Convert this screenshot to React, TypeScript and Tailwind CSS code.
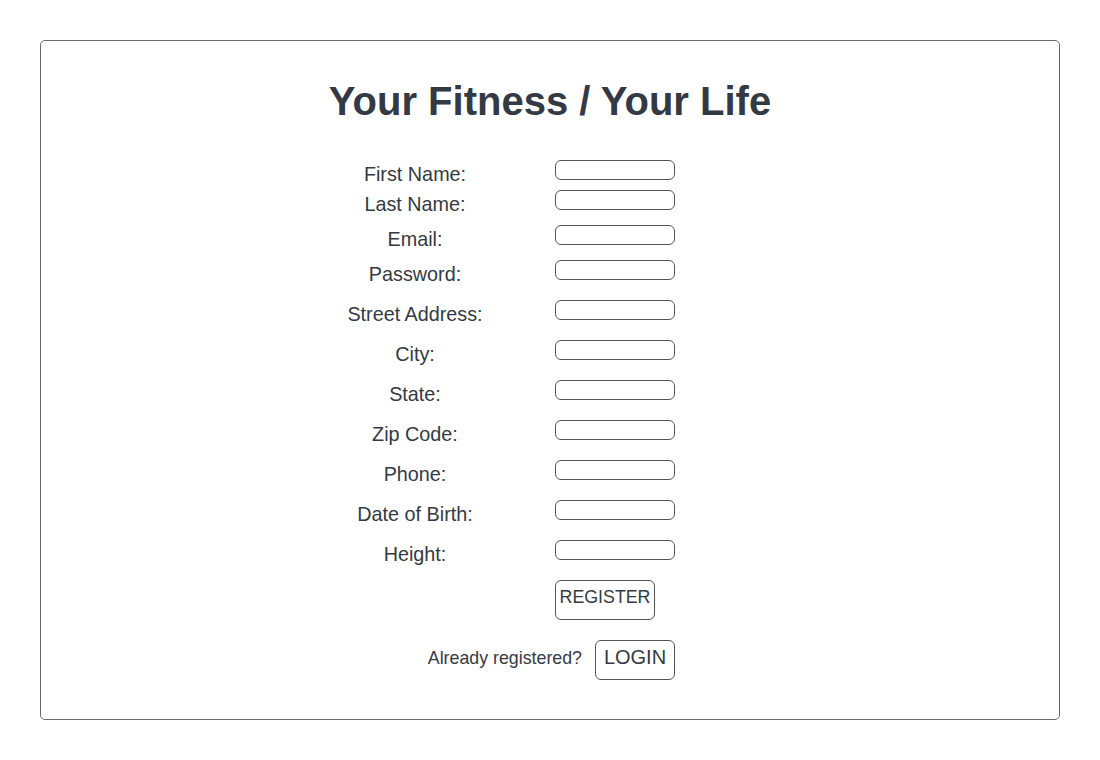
import React from "react";

const rows: { label: string; mt: string }[] = [
  { label: "First Name:", mt: "mt-0" },
  { label: "Last Name:", mt: "mt-[10px]" },
  { label: "Email:", mt: "mt-[15px]" },
  { label: "Password:", mt: "mt-[15px]" },
  { label: "Street Address:", mt: "mt-[20px]" },
  { label: "City:", mt: "mt-[20px]" },
  { label: "State:", mt: "mt-[20px]" },
  { label: "Zip Code:", mt: "mt-[20px]" },
  { label: "Phone:", mt: "mt-[20px]" },
  { label: "Date of Birth:", mt: "mt-[20px]" },
  { label: "Height:", mt: "mt-[20px]" },
];

export default function App() {
  return (
    <div
      className="w-[1100px] h-[760px] bg-white pt-10 px-10"
      style={{ fontFamily: '"Liberation Sans", Arial, sans-serif' }}
    >
      <div className="h-[680px] border border-[#6a6a6a] rounded-[5px] flex flex-col text-[#333a44]">
        <h1 className="mt-[37px] h-[46px] leading-[46px] text-center text-[40px] font-bold">
          Your Fitness / Your Life
        </h1>
        <div className="mt-[36px] ml-[274px] w-[360px] flex flex-col">
          {rows.map((r) => (
            <div key={r.label} className={`flex items-start h-[20px] ${r.mt}`}>
              <div className="w-[200px] text-center text-[19.8px] leading-[22px] mt-[3px] whitespace-nowrap">
                {r.label}
              </div>
              <div className="ml-[40px] w-[120px] h-[20px] border border-[#555] rounded-[6px]" />
            </div>
          ))}
          <div className="flex mt-[20px]">
            <div className="ml-[240px] w-[100px] h-[40px] border border-[#555] rounded-[6px] flex items-center justify-center pb-[7px] text-[17.8px] leading-[20px]">
              REGISTER
            </div>
          </div>
          <div className="flex items-center justify-end mt-[20px] h-[40px]">
            <span className="text-[17.8px] leading-[20px] pb-[4px]">Already registered?</span>
            <div className="ml-[13px] w-[80px] h-[40px] border border-[#555] rounded-[6px] flex items-center justify-center pb-[7px] text-[20px] leading-[22px]">
              LOGIN
            </div>
          </div>
        </div>
      </div>
    </div>
  );
}
